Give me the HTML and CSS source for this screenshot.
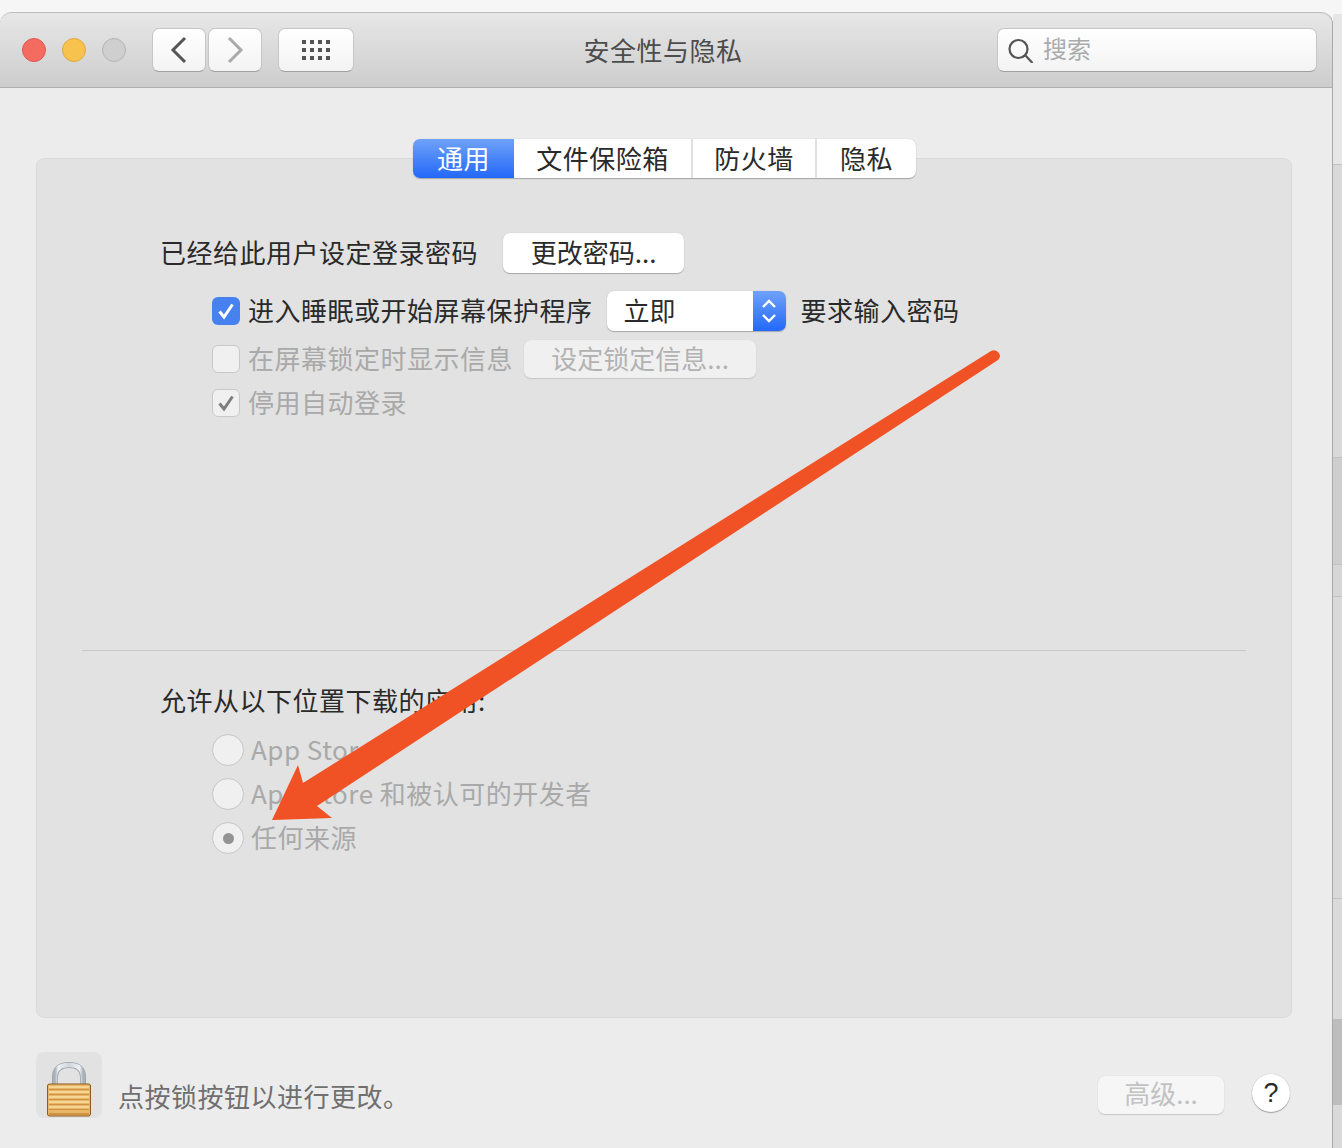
FILE: index.html
```html
<!DOCTYPE html>
<html lang="zh-CN">
<head>
  <meta charset="UTF-8">
  <title>安全性与隐私</title>
  <link rel="stylesheet" href="styles.css">
</head>
<body>

<div class="window">
  <div class="titlebar">
    <div class="lights">
      <span class="light red"></span>
      <span class="light yellow"></span>
      <span class="light grey"></span>
    </div>
    <div class="nav">
      <div class="tool-btn nav-btn">
        <svg width="20" height="30" viewBox="0 0 20 30"><path d="M16 3 L4 15 L16 27" fill="none" stroke="#555" stroke-width="3"/></svg>
      </div>
      <div class="tool-btn nav-btn">
        <svg width="20" height="30" viewBox="0 0 20 30"><path d="M4 3 L16 15 L4 27" fill="none" stroke="#aaa" stroke-width="3"/></svg>
      </div>
    </div>
    <div class="tool-btn grid-btn">
      <svg width="30" height="22" viewBox="0 0 30 22" fill="#555">
        <rect x="1" y="1" width="4" height="4"/><rect x="9" y="1" width="4" height="4"/><rect x="17" y="1" width="4" height="4"/><rect x="25" y="1" width="4" height="4"/>
        <rect x="1" y="9" width="4" height="4"/><rect x="9" y="9" width="4" height="4"/><rect x="17" y="9" width="4" height="4"/><rect x="25" y="9" width="4" height="4"/>
        <rect x="1" y="17" width="4" height="4"/><rect x="9" y="17" width="4" height="4"/><rect x="17" y="17" width="4" height="4"/><rect x="25" y="17" width="4" height="4"/>
      </svg>
    </div>
    <div class="title">安全性与隐私</div>
    <div class="search">
      <svg width="26" height="26" viewBox="0 0 26 26"><circle cx="10.500" cy="12" r="9" fill="none" stroke="#555" stroke-width="2.200"/><path d="M17 18 L24.500 26" stroke="#555" stroke-width="2.200"/></svg>
      <span class="search-text">搜索</span>
    </div>
  </div>

  <div class="content">
    <div class="panel">
      <div class="tabs">
        <div class="tab tab-active">通用</div>
        <div class="tab tab-files">文件保险箱</div>
        <div class="tab tab-fire">防火墙</div>
        <div class="tab tab-privacy">隐私</div>
      </div>

      <div class="top-section">
        <div class="row row-pass">
          <span class="label">已经给此用户设定登录密码</span>
          <div class="btn btn-change">更改密码...</div>
        </div>
        <div class="row row-sleep">
          <span class="check check-on">
            <svg width="20" height="20" viewBox="0 0 20 20"><path d="M3.500 10.500 L8 16 L16.500 3.500" fill="none" stroke="#fff" stroke-width="3"/></svg>
          </span>
          <span class="label">进入睡眠或开始屏幕保护程序</span>
          <div class="select">
            <span class="select-value">立即</span>
            <span class="select-arrows">
              <svg width="18" height="30" viewBox="0 0 18 30"><path d="M3 11 L9 5 L15 11 M3 19 L9 25 L15 19" fill="none" stroke="#fff" stroke-width="2.400"/></svg>
            </span>
          </div>
          <span class="label">要求输入密码</span>
        </div>
        <div class="row row-lock">
          <span class="check check-off"></span>
          <span class="label muted">在屏幕锁定时显示信息</span>
          <div class="btn btn-disabled btn-lockinfo">设定锁定信息...</div>
        </div>
        <div class="row row-auto">
          <span class="check check-off">
            <svg width="20" height="20" viewBox="0 0 20 20"><path d="M3.500 10.500 L8 16 L16.500 3.500" fill="none" stroke="#7e7e7e" stroke-width="3"/></svg>
          </span>
          <span class="label muted">停用自动登录</span>
        </div>
      </div>

      <div class="divider"></div>

      <div class="bottom-section">
        <div class="label section-title">允许从以下位置下载的应用:</div>
        <div class="radios">
          <div class="radio-row"><span class="radio"></span><span class="label muted">App Store</span></div>
          <div class="radio-row"><span class="radio"></span><span class="label muted">App Store 和被认可的开发者</span></div>
          <div class="radio-row"><span class="radio radio-on"></span><span class="label muted">任何来源</span></div>
        </div>
      </div>
    </div>

    <div class="footer">
      <div class="lock-tile">
        <svg width="46" height="58" viewBox="0 0 46 58">
          <defs>
            <linearGradient id="shackle" x1="0" x2="1" y1="0" y2="0">
              <stop offset="0" stop-color="#aab2ba"/>
              <stop offset="0.12" stop-color="#eef1f4"/>
              <stop offset="0.5" stop-color="#cfd5db"/>
              <stop offset="0.88" stop-color="#eef1f4"/>
              <stop offset="1" stop-color="#aab2ba"/>
            </linearGradient>
          </defs>
          <path d="M9 25 V17 C9 9 14 5 23 5 C32 5 37 9 37 17 V25" fill="none" stroke="#9aa2aa" stroke-width="6"/>
          <path d="M9 25 V17 C9 9 14 5 23 5 C32 5 37 9 37 17 V25" fill="none" stroke="url(#shackle)" stroke-width="4.500"/>
          <rect x="1.500" y="24" width="43" height="32" rx="2" fill="#e9b566" stroke="#8d5a22" stroke-width="1"/>
          <g fill="#f6d694">
            <rect x="3" y="26" width="40" height="2"/><rect x="3" y="31" width="40" height="2"/><rect x="3" y="36" width="40" height="2"/><rect x="3" y="41" width="40" height="2"/><rect x="3" y="46" width="40" height="2"/>
          </g>
          <g fill="#cf9143">
            <rect x="3" y="29" width="40" height="1"/><rect x="3" y="34" width="40" height="1"/><rect x="3" y="39" width="40" height="1"/><rect x="3" y="44" width="40" height="1"/><rect x="3" y="49" width="40" height="1"/><rect x="3" y="53" width="40" height="2"/>
          </g>
        </svg>
      </div>
      <div class="lock-text">点按锁按钮以进行更改。</div>
      <div class="btn btn-advanced">高级...</div>
      <div class="help">?</div>
    </div>
  </div>
</div>

<!-- bit of the window behind, showing past the right edge -->
<div class="side-strip">
  <div class="strip strip-a"></div>
  <div class="strip strip-b"></div>
  <div class="strip strip-c"></div>
  <div class="strip strip-d"></div>
  <div class="strip strip-e"></div>
  <div class="strip strip-f"></div>
  <div class="strip strip-g"></div>
</div>

<!-- annotation drawn over the window -->
<svg class="arrow" width="1342" height="1148" viewBox="0 0 1342 1148">
  <path fill="#f15225" d="M991 351 Q995 349 998 352 Q1002 356 998 360 L317 806 L332 818 L272 820 L298 765 L303 783 Z"/>
</svg>

</body>
</html>
```

FILE: styles.css
```css
body {
  margin: 0;
  width: 1342px;
  height: 1148px;
  overflow: hidden;
  position: relative;
  background-color: #f6f6f6;
  font-family: "Noto Sans CJK SC", "Liberation Sans", sans-serif;
  font-size: 26px;
  color: #2a2a2a;
}

.window {
  margin-top: 12px;
  width: 1333px;
  height: 1136px;
  box-sizing: border-box;
  background-color: #ececec;
  border-top-left-radius: 12px;
  border-top-right-radius: 12px;
  border-right: 1px solid #a9a9a9;
}

.titlebar {
  height: 76px;
  box-sizing: border-box;
  display: flex;
  align-items: flex-start;
  padding: 15px 15px 0 22px;
  position: relative;
  background: linear-gradient(#e7e7e7, #cdcdcd);
  border-top: 1px solid #bdbdbd;
  border-bottom: 1px solid #b0b0b0;
  border-top-left-radius: 12px;
  border-top-right-radius: 12px;
}

.lights {
  display: flex;
  gap: 16px;
  margin-top: 10px;
}

.light {
  width: 24px;
  height: 24px;
  box-sizing: border-box;
  border-radius: 50%;
  border: 1px solid;
}

.red { background-color: #f46b60; border-color: #dd5a50; }
.yellow { background-color: #f8c24f; border-color: #dfa93f; }
.grey { background-color: #cfcfcf; border-color: #b5b5b5; }

.tool-btn {
  height: 44px;
  box-sizing: border-box;
  display: flex;
  align-items: center;
  justify-content: center;
  background: linear-gradient(#ffffff, #f3f3f3);
  border-radius: 7px;
  border: 1px solid #c6c6c6;
  border-bottom-color: #a0a0a0;
}

.nav {
  display: flex;
  gap: 2px;
  margin-left: 26px;
}

.nav-btn { width: 54px; }

.grid-btn {
  width: 76px;
  margin-left: 16px;
}

.title {
  position: absolute;
  left: 0;
  right: 6px;
  top: 18px;
  text-align: center;
  line-height: 38px;
  letter-spacing: 0.5px;
  color: #4c4c4c;
  pointer-events: none;
}

.search {
  margin-left: auto;
  width: 320px;
  height: 44px;
  box-sizing: border-box;
  display: flex;
  align-items: center;
  gap: 9px;
  padding-left: 10px;
  background: linear-gradient(#ffffff, #f3f3f3);
  border-radius: 7px;
  border: 1px solid #c6c6c6;
  border-bottom-color: #a0a0a0;
  font-size: 24px;
  color: #ababab;
}

.search-text { padding-bottom: 6px; }

.content {
  padding: 70px 40px 0 36px;
}

.panel {
  height: 860px;
  box-sizing: border-box;
  position: relative;
  background-color: #e2e2e2;
  border: 1px solid #dadada;
  border-radius: 8px;
}

.tabs {
  position: absolute;
  top: -20px;
  left: 376px;
  display: flex;
  height: 39px;
  box-sizing: border-box;
  background-color: #fff;
  border-radius: 7px;
  box-shadow: 0 1px 1px #a6a6a6, 0 0 1px #bbb;
  overflow: hidden;
  line-height: 37px;
  letter-spacing: 0.5px;
  color: #2a2a2a;
}

.tab {
  text-align: center;
  border-right: 2px solid #e0e0e0;
  box-sizing: border-box;
}

.tab-active {
  width: 101px;
  color: #fff;
  border-right: none;
  background: linear-gradient(#6fa2f8, #2368f9);
}

.tab-files { width: 179px; }
.tab-fire { width: 124px; }
.tab-privacy { width: 99px; border-right: none; }

.label {
  letter-spacing: 0.5px;
  line-height: 38px;
  padding-bottom: 2px;
  white-space: nowrap;
}

.muted { color: #a9a9a9; }

.top-section {
  height: 491px;
  box-sizing: border-box;
  padding: 74px 0 0 123px;
}

.row {
  display: flex;
  align-items: center;
}

.row-pass { height: 40px; gap: 25px; }

.row-sleep {
  height: 40px;
  margin-top: 18px;
  margin-left: 52px;
}

.row-lock {
  height: 40px;
  margin-top: 8px;
  margin-left: 52px;
}

.row-auto {
  height: 30px;
  margin-top: 9px;
  margin-left: 52px;
}

.check {
  width: 28px;
  height: 28px;
  box-sizing: border-box;
  flex-shrink: 0;
  margin-right: 8px;
  border-radius: 6px;
  display: flex;
  align-items: center;
  justify-content: center;
}

.check-on { background-color: #4781f0; }

.check-off {
  background-color: #f0f0f0;
  border: 1px solid #c9c9c9;
}

.btn {
  height: 40px;
  box-sizing: border-box;
  text-align: center;
  border-radius: 7px;
  background-color: #fff;
  box-shadow: 0 1px 1px #a8a8a8, 0 0 1px #bbb;
  line-height: 38px;
  color: #2a2a2a;
}

.btn-change { width: 181px; }

.btn-disabled {
  background-color: #f0f0f0;
  color: #b2b2b2;
  box-shadow: 0 1px 1px #c6c6c6, 0 0 1px #ccc;
}

.btn-lockinfo {
  width: 232px;
  height: 38px;
  margin-left: 11px;
  line-height: 35px;
}

.select {
  width: 179px;
  height: 40px;
  display: flex;
  margin: 0 15px 0 14px;
  border-radius: 7px;
  overflow: hidden;
  background-color: #fff;
  box-shadow: 0 1px 1px #a8a8a8, 0 0 1px #bbb;
}

.select-value {
  flex: 1;
  padding-left: 17px;
  line-height: 37px;
}

.select-arrows {
  width: 33px;
  display: flex;
  align-items: center;
  justify-content: center;
  background: linear-gradient(#6fa2f8, #2368f9);
}

.divider {
  height: 1px;
  margin: 0 45px;
  background-color: #c8c8c8;
}

.bottom-section {
  padding: 30px 0 0 123px;
}

.section-title { height: 36px; }

.radios {
  display: flex;
  flex-direction: column;
  gap: 12px;
  margin: 15px 0 0 52px;
}

.radio-row {
  display: flex;
  align-items: center;
  height: 32px;
  gap: 7px;
}

.radio {
  width: 32px;
  height: 32px;
  box-sizing: border-box;
  border-radius: 50%;
  background-color: #f0f0f0;
  border: 1px solid #c6c6c6;
  display: flex;
  align-items: center;
  justify-content: center;
}

.radio-on::after {
  content: "";
  width: 11px;
  height: 11px;
  border-radius: 50%;
  background-color: #939393;
}

.footer {
  display: flex;
  align-items: flex-start;
  margin-top: 34px;
}

.lock-tile {
  width: 66px;
  height: 66px;
  border-radius: 8px;
  background-color: #e2e2e2;
  display: flex;
  justify-content: center;
  padding-top: 8px;
  box-sizing: border-box;
}

.lock-text {
  margin: 25px 0 0 16px;
  line-height: 38px;
  letter-spacing: 0.5px;
  color: #6f6f6f;
}

.btn-advanced {
  width: 126px;
  height: 38px;
  margin: 24px 0 0 auto;
  line-height: 33px;
  background-color: #f6f6f6;
  color: #c2c2c2;
  box-shadow: 0 1px 1px #c6c6c6, 0 0 1px #ccc;
}

.help {
  width: 38px;
  height: 38px;
  margin: 22px 2px 0 28px;
  border-radius: 50%;
  background-color: #fff;
  box-shadow: 0 1px 1px #a0a0a0, 0 0 1px #aaa;
  text-align: center;
  font-family: "Liberation Sans", sans-serif;
  font-size: 27px;
  line-height: 38px;
  color: #2a2a2a;
}

.side-strip {
  position: absolute;
  left: 1333px;
  top: 14px;
  width: 9px;
  height: 1134px;
  display: flex;
  flex-direction: column;
}

.strip { border-bottom: 1px solid #c2c2c2; }

.strip-a { height: 150px; background-color: #e6e6e6; }
.strip-b { height: 292px; background-color: #d9d9d9; }
.strip-c { height: 106px; background-color: #cecece; }
.strip-d { height: 31px; background-color: #d6d6d6; }
.strip-e { height: 301px; background-color: #d9d9d9; }
.strip-f { height: 120px; background-color: #dadada; border-bottom: none; }
.strip-g { flex: 1; background: linear-gradient(#bdbdbd 86px, #d9d9d9 86px); border-bottom: none; }

.arrow {
  position: absolute;
  left: 0;
  top: 0;
  pointer-events: none;
}
```
